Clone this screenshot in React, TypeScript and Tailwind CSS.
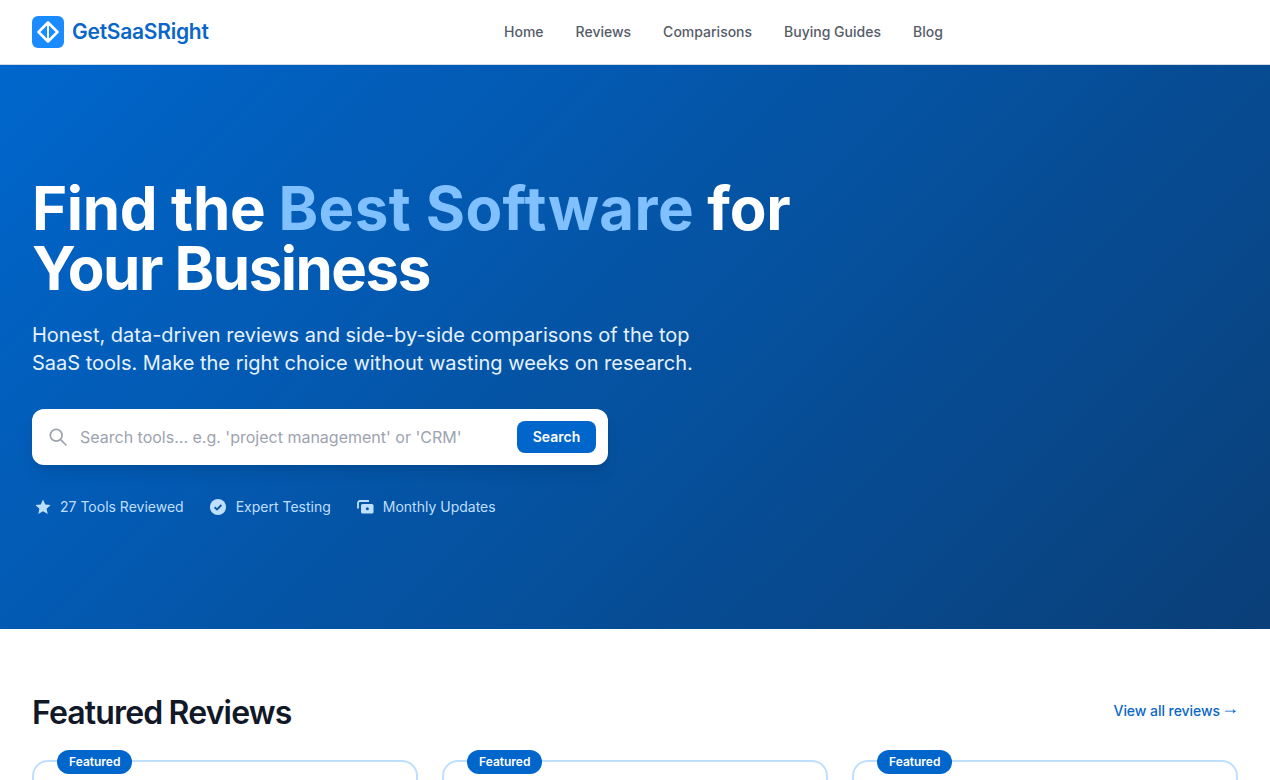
function Logo() {
  return (
    <svg width="32" height="32" viewBox="0 0 32 32" className="shrink-0">
      <rect width="32" height="32" rx="6" fill="#1a8cff" />
      <path d="M16 6.5 L25.5 16 L16 25.5 L6.5 16 Z" fill="none" stroke="#fff" strokeWidth="2.6" strokeLinejoin="round" />
      <path d="M16 6.5 V25.5" stroke="#fff" strokeWidth="2" />
    </svg>
  );
}

function SearchIcon() {
  return (
    <svg width="18" height="18" viewBox="0 0 18 18" className="shrink-0" fill="none" stroke="#9ca3af" strokeWidth="1.7" strokeLinecap="round">
      <circle cx="7.2" cy="7.2" r="5.9" />
      <path d="M11.6 11.6 L17 17" />
    </svg>
  );
}

function Star() {
  return (
    <span className="w-5 h-5 flex items-center justify-center shrink-0">
      <svg width="16" height="16" viewBox="0 0 20 20" fill="#bfdfff" className="translate-x-px">
        <path d="M10 .6l2.8 6.2 6.7.8-5 4.5 1.4 6.7-5.9-3.4-5.9 3.4 1.4-6.7-5-4.5 6.7-.8z" />
      </svg>
    </span>
  );
}

function Check() {
  return (
    <span className="w-5 h-5 flex items-center justify-center shrink-0">
      <svg width="16" height="16" viewBox="0 0 16 16">
        <circle cx="8" cy="8" r="8" fill="#bfdfff" />
        <path d="M4.6 8.2l2.4 2.3 4.4-4.5" fill="none" stroke="#0a55a8" strokeWidth="1.9" />
      </svg>
    </span>
  );
}

function Updates() {
  return (
    <span className="w-5 h-5 flex items-center justify-center shrink-0">
      <svg width="17" height="14" viewBox="0 0 17 14" className="translate-x-px">
        <path d="M1 8.5V3a2 2 0 0 1 2-2h9" fill="none" stroke="#bfdfff" strokeWidth="1.8" />
        <rect x="4" y="4" width="12.5" height="9.5" rx="1.6" fill="#bfdfff" />
        <circle cx="10.4" cy="8.7" r="1.5" fill="#0a55a8" />
      </svg>
    </span>
  );
}

const navItems = ["Home", "Reviews", "Comparisons", "Buying Guides", "Blog"];

export default function App() {
  return (
    <div className="h-[780px] overflow-hidden bg-white font-['Inter',sans-serif]">
      <header className="h-[65px] border-b border-[#d5dbe5] bg-white px-8 flex items-center relative">
        <div className="flex items-center gap-2">
          <Logo />
          <span className="text-[21px] font-semibold text-[#0a66c8] tracking-[-0.25px]">GetSaaSRight</span>
        </div>
        <nav className="absolute left-[504px] top-0 h-full flex items-center gap-8">
          {navItems.map((n) => (
            <a key={n} className="text-sm font-medium text-[#555c68]">{n}</a>
          ))}
        </nav>
      </header>

      <section className="h-[564px] bg-[linear-gradient(135deg,#0066cc_0%,#0a3f78_100%)] px-8 pt-[113px]">
        <h1 className="text-[60px] leading-[60px] font-bold text-white max-w-[800px]">
          <span className="inline-block tracking-[-0.35px]">Find the</span>{" "}
          <span className="inline-block text-[#80c0ff] tracking-[0.4px] -ml-px">Best Software</span>{" "}
          <span className="inline-block tracking-[-0.2px] -ml-px">for</span>{" "}
          <span className="inline-block tracking-[-1.5px]">Your Business</span>
        </h1>
        <p className="mt-[23px] text-xl leading-[28px] text-[#e6f2ff] max-w-[680px]">
          Honest, data-driven reviews and side-by-side comparisons of the top SaaS tools. Make the right choice without wasting weeks on research.
        </p>
        <div className="mt-8 w-[576px] h-14 bg-white rounded-xl shadow-lg flex items-center pl-[17px] pr-3">
          <SearchIcon />
          <span className="ml-[13px] flex-1 text-base text-[#9ca3af]">Search tools... e.g. 'project management' or 'CRM'</span>
          <button className="h-8 w-[79px] rounded-lg bg-[#0066cc] text-sm font-semibold text-white">Search</button>
        </div>
        <div className="mt-8 flex items-center gap-6 text-sm text-[#bfdfff]">
          <div className="flex items-center gap-2"><Star /><span>27 Tools Reviewed</span></div>
          <div className="flex items-center gap-2"><Check /><span>Expert Testing</span></div>
          <div className="flex items-center gap-2"><Updates /><span>Monthly Updates</span></div>
        </div>
      </section>

      <section className="px-8 pt-16">
        <div className="flex items-center justify-between">
          <h2 className="text-[32px] leading-[40px] font-semibold text-[#111827] tracking-[-0.85px] [word-spacing:-1px]">Featured Reviews</h2>
          <a className="pb-1 text-sm font-medium text-[#0a66c8] tracking-[-0.05px] flex items-center -mr-px">
            View all reviews
            <span className="ml-px font-['Liberation_Sans',sans-serif] font-normal text-[18px] leading-none -translate-y-[3px]">→</span>
          </a>
        </div>
        <div className="mt-[27px] grid grid-cols-3 gap-6">
          {[0, 1, 2].map((i) => (
            <div key={i} className="relative h-[200px] rounded-2xl border-2 border-[#bfdfff] bg-white">
              <span className="absolute left-[23px] -top-3 h-6 px-3 rounded-full bg-[#0066cc] text-xs leading-6 font-semibold text-white">Featured</span>
            </div>
          ))}
        </div>
      </section>
    </div>
  );
}
